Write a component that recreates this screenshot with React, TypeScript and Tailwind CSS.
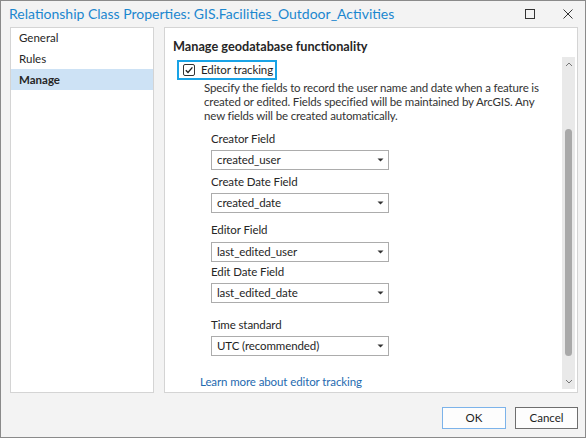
import React from "react";

const font = { fontFamily: 'Lato, "Noto Sans", sans-serif' };

function Select({ value }: { value: string }) {
  return (
    <div className="ml-[46px] w-[178px] h-[20px] bg-white border border-[#acacac] flex items-center justify-between pl-[5px] pr-[4px] text-[11.5px] tracking-[-0.1px] text-[#1e1e1e]">
      <span className="leading-none">{value}</span>
      <svg width="7" height="4" viewBox="0 0 7 4"><path d="M0.5 0.5 L6.5 0.5 L3.5 3.5 Z" fill="#333" /></svg>
    </div>
  );
}

function Label({ text, mt }: { text: string; mt: string }) {
  return <div className={`ml-[46px] h-[14px] leading-[14px] text-[11.5px] tracking-[-0.1px] text-[#262626] ${mt}`}>{text}</div>;
}

export default function App() {
  return (
    <div className="w-[586px] h-[438px] bg-[#f3f3f3] border border-[#8a8a8a] flex flex-col overflow-hidden" style={font}>
      <div className="h-[26px] flex items-center pl-[8px] pr-[12px]">
        <div className="text-[14px] text-[#1b87cf] leading-none flex-1 whitespace-nowrap">Relationship Class Properties: GIS.Facilities_Outdoor_Activities</div>
        <svg width="10" height="10" viewBox="0 0 10 10" className="mr-[28px]"><rect x="0.5" y="0.5" width="9" height="9" fill="none" stroke="#333" /></svg>
        <svg width="10" height="10" viewBox="0 0 10 10"><path d="M0.5 0.5 L9.5 9.5 M9.5 0.5 L0.5 9.5" stroke="#333" strokeWidth="1" /></svg>
      </div>
      <div className="flex h-[366px] pl-[9px] pr-[7px] gap-[10px]">
        <div className="w-[144px] bg-white border border-[#d4d4d4] text-[11.5px] text-[#262626]">
          <div className="-mt-[1px]">
            <div className="h-[21px] flex items-center pl-[8px]">General</div>
            <div className="h-[21px] flex items-center pl-[8px]">Rules</div>
            <div className="h-[21px] flex items-center pl-[8px] bg-[#cde2f5] font-bold">Manage</div>
          </div>
        </div>
        <div className="flex-1 bg-white border border-[#d4d4d4] flex flex-col">
          <div className="h-[30px] pt-[9px] pl-[8px] text-[12.7px] leading-[18px] font-bold text-[#262626]">Manage geodatabase functionality</div>
          <div className="flex flex-1 mb-[3px]">
            <div className="flex-1 flex flex-col">
              <div className="mt-[3px] ml-[12px] w-[100px] h-[20px] border-2 border-[#19a3e6] flex items-center pl-[4px]">
                <div className="w-[12px] h-[12px] border border-[#333] rounded-[2px] flex items-center justify-center">
                  <svg width="10" height="10" viewBox="0 0 10 10"><path d="M1.8 5.2 L4 7.4 L8.4 2.4" fill="none" stroke="#222" strokeWidth="1.4" /></svg>
                </div>
                <span className="ml-[6px] text-[11.5px] tracking-[-0.1px] text-[#1e1e1e] leading-none whitespace-nowrap">Editor tracking</span>
              </div>
              <div className="mt-[1px] ml-[39px] mr-[14px] text-[11.5px] tracking-[-0.15px] leading-[14px] text-[#333]">
                Specify the fields to record the user name and date when a feature is created or edited. Fields specified will be maintained by ArcGIS. Any new fields will be created automatically.
              </div>
              <Label text="Creator Field" mt="mt-[9px]" />
              <div className="mt-[4px]"><Select value="created_user" /></div>
              <Label text="Create Date Field" mt="mt-[5px]" />
              <div className="mt-[4px]"><Select value="created_date" /></div>
              <Label text="Editor Field" mt="mt-[10px]" />
              <div className="mt-[5px]"><Select value="last_edited_user" /></div>
              <Label text="Edit Date Field" mt="mt-[3px]" />
              <div className="mt-[4px]"><Select value="last_edited_date" /></div>
              <Label text="Time standard" mt="mt-[15px]" />
              <div className="mt-[4px]"><Select value="UTC (recommended)" /></div>
              <div className="mt-[19px] ml-[35px] text-[11.5px] tracking-[-0.1px] leading-[14px] text-[#1e6aaf]">Learn more about editor tracking</div>
            </div>
            <div className="w-[13px] mr-[2px] bg-[#e9e9e9] flex flex-col items-center">
              <svg width="8" height="5" viewBox="0 0 8 5" className="mt-[5px]"><path d="M1 4 L4 1 L7 4" fill="none" stroke="#777" strokeWidth="1" /></svg>
              <div className="w-[7px] h-[227px] mt-[62px] bg-[#a9a9a9] rounded-full" />
              <div className="flex-1" />
              <svg width="8" height="5" viewBox="0 0 8 5" className="mb-[5px]"><path d="M1 1 L4 4 L7 1" fill="none" stroke="#777" strokeWidth="1" /></svg>
            </div>
          </div>
        </div>
      </div>
      <div className="flex justify-end gap-[9px] pt-[14px] pr-[7px]">
        <button className="w-[64px] h-[22px] bg-[#fdfdfd] border border-[#7cb3ea] text-[11.5px] text-[#1e1e1e]">OK</button>
        <button className="w-[63px] h-[22px] bg-[#fdfdfd] border border-[#6e6e6e] text-[11.5px] text-[#1e1e1e]">Cancel</button>
      </div>
    </div>
  );
}
